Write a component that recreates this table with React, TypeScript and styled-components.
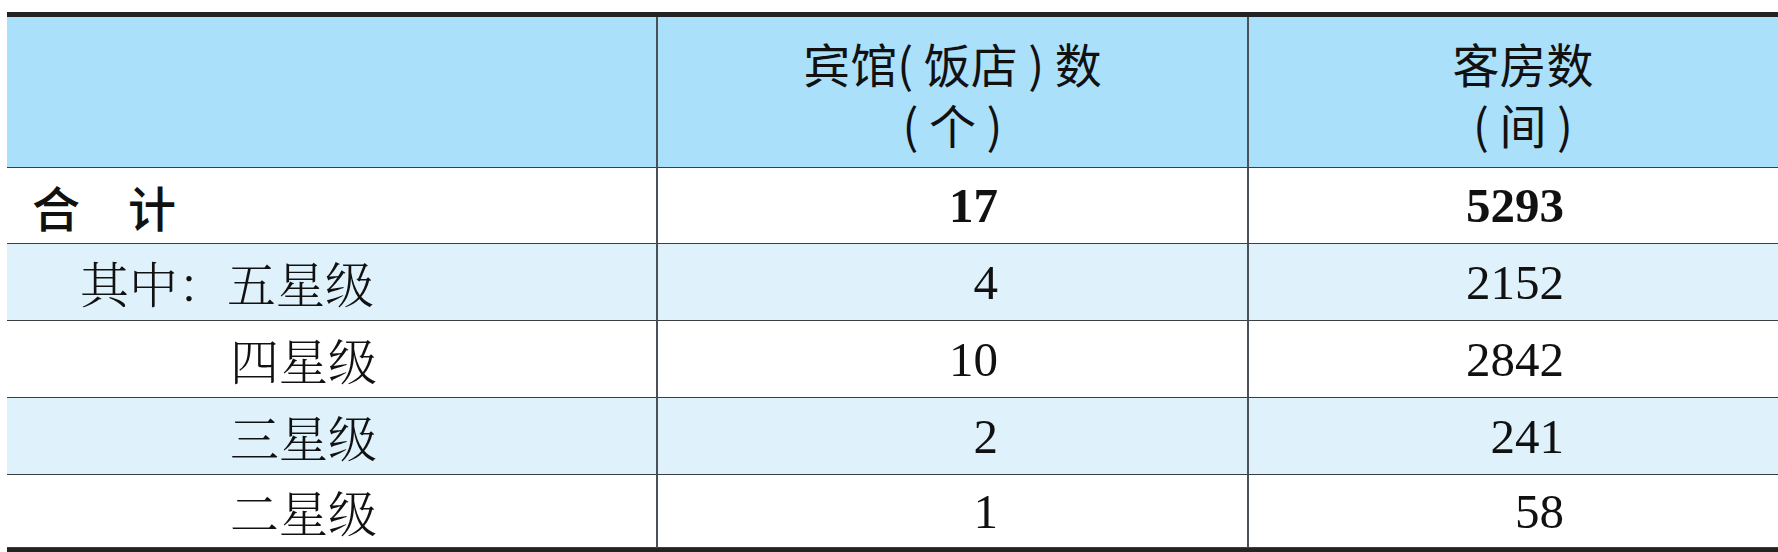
import React from "react";
import styled, { createGlobalStyle } from "styled-components";

const GlobalStyle = createGlobalStyle`
    html, body {
        margin: 0;
        padding: 0;
        background: #fff;
        overflow: hidden;
    }
`;

const Page = styled.div`
    width: 1778px;
    height: 552px;
    padding: 12px 0 0 7px;
    box-sizing: border-box;
    overflow: hidden;
`;

const Table = styled.div`
    width: 1790px;
    display: grid;
    grid-template-columns: 649px 591px 1fr;
    border-top: 5px solid #232323;
    border-bottom: 5px solid #232323;
`;

const Cell = styled.div<{ $bg: string; $h: number; $divider?: boolean }>`
    height: ${(p) => p.$h}px;
    box-sizing: border-box;
    background: ${(p) => p.$bg};
    border-bottom: 1px solid #3a3f44;
    border-left: ${(p) => (p.$divider ? "2px solid #4a5158" : "none")};
    display: flex;
    align-items: center;
`;

const HeadCell = styled(Cell)`
    flex-direction: column;
    justify-content: center;
    text-align: center;
    font-family: "Noto Sans CJK SC", "Liberation Sans", sans-serif;
    font-size: 47px;
    color: #111;
    padding-top: 1px;
`;

const HeadLine = styled.div`
    height: 61px;
    line-height: 61px;
    overflow: visible;
    white-space: nowrap;
`;

const LabelCell = styled(Cell)<{ $indent: number }>`
    padding-left: ${(p) => p.$indent}px;
`;

const NumCell = styled(Cell)<{ $right: number; $bold?: boolean }>`
    justify-content: flex-end;
    padding-right: ${(p) => p.$right}px;
    font-family: "Liberation Serif", "Times New Roman", serif;
    font-size: 49px;
    font-weight: ${(p) => (p.$bold ? 700 : 400)};
    color: #111;
`;

const TotalLabel = styled.span`
    font-family: "Noto Sans CJK SC", "Liberation Sans", sans-serif;
    font-size: 48px;
    font-weight: 500;
    color: #111;
`;

const SubLabel = styled.span`
    font-family: "Noto Serif CJK SC", "Noto Sans CJK SC", serif;
    font-size: 49px;
    font-weight: 300;
    color: #111;
`;

interface IRow {
    label: string;
    hotels: string;
    rooms: string;
    indent: number;
}

const rows: Array<IRow> = [
    { label: "其中：五星级", hotels: "4", rooms: "2152", indent: 73 },
    { label: "四星级", hotels: "10", rooms: "2842", indent: 223 },
    { label: "三星级", hotels: "2", rooms: "241", indent: 223 },
    { label: "二星级", hotels: "1", rooms: "58", indent: 223 },
];

const HEAD_BG = "#abe0fa";
const STRIPE_BG = "#dff2fc";
const WHITE = "#ffffff";

const App: React.FunctionComponent = () => {
    return (
        <Page>
            <GlobalStyle />
            <Table>
                <HeadCell $bg={HEAD_BG} $h={151} />
                <HeadCell $bg={HEAD_BG} $h={151} $divider>
                    <HeadLine>宾馆( 饭店 ) 数</HeadLine>
                    <HeadLine>( 个 )</HeadLine>
                </HeadCell>
                <HeadCell $bg={HEAD_BG} $h={151} $divider>
                    <HeadLine>客房数</HeadLine>
                    <HeadLine>( 间 )</HeadLine>
                </HeadCell>

                <LabelCell $bg={WHITE} $h={76} $indent={25}>
                    <TotalLabel>合　计</TotalLabel>
                </LabelCell>
                <NumCell $bg={WHITE} $h={76} $divider $right={249} $bold>
                    17
                </NumCell>
                <NumCell $bg={WHITE} $h={76} $divider $right={233} $bold>
                    5293
                </NumCell>

                {rows.map((row, i) => {
                    const bg = i % 2 === 0 ? STRIPE_BG : WHITE;
                    const h = i === rows.length - 1 ? 73 : 77;
                    return (
                        <React.Fragment key={row.label}>
                            <LabelCell $bg={bg} $h={h} $indent={row.indent}>
                                <SubLabel>{row.label}</SubLabel>
                            </LabelCell>
                            <NumCell $bg={bg} $h={h} $divider $right={249}>
                                {row.hotels}
                            </NumCell>
                            <NumCell $bg={bg} $h={h} $divider $right={233}>
                                {row.rooms}
                            </NumCell>
                        </React.Fragment>
                    );
                })}
            </Table>
        </Page>
    );
};

export default App;
